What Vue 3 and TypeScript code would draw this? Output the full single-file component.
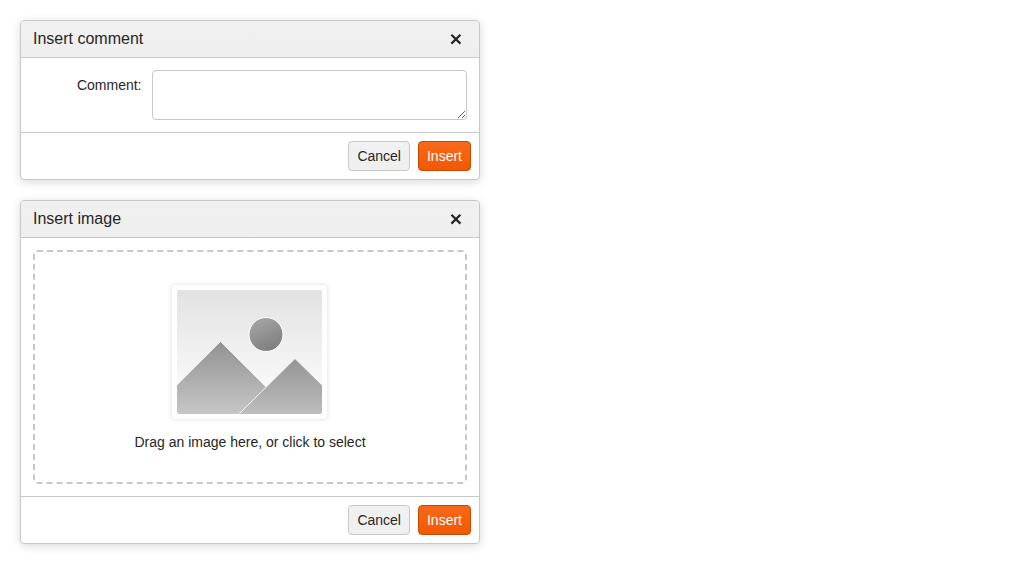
<script setup lang="ts">
import { ref } from 'vue'

const comment = ref<string>('')
const dialogs: { title: string; kind: 'comment' | 'image' }[] = [
  { title: 'Insert comment', kind: 'comment' },
  { title: 'Insert image', kind: 'image' },
]
</script>

<template>
  <main class="page">
    <section v-for="dialog in dialogs" :key="dialog.kind" class="dialog">
      <header class="header">
        <h2 class="title">{{ dialog.title }}</h2>
        <button class="close" type="button" aria-label="Close">
          <svg width="12" height="12" viewBox="0 0 12 12">
            <path d="M1.4 1.8 10.4 10.6M10.4 1.8 1.4 10.6" stroke="#262626" stroke-width="2.2" fill="none" />
          </svg>
        </button>
      </header>
      <div class="body">
        <div v-if="dialog.kind === 'comment'" class="field">
          <label class="label" for="comment">Comment:</label>
          <textarea id="comment" v-model="comment" class="input"></textarea>
        </div>
        <div v-else class="dropzone">
          <div class="frame">
            <svg class="picture" width="145" height="124" viewBox="0 0 145 124">
              <defs>
                <linearGradient id="sky" x1="0" y1="0" x2="0" y2="1">
                  <stop offset="0" stop-color="#e2e2e2" />
                  <stop offset="1" stop-color="#fff" />
                </linearGradient>
                <linearGradient id="hill" gradientUnits="userSpaceOnUse" x1="0" y1="52" x2="0" y2="124">
                  <stop offset="0" stop-color="#929292" />
                  <stop offset="1" stop-color="#c6c6c6" />
                </linearGradient>
                <linearGradient id="hill-front" gradientUnits="userSpaceOnUse" x1="0" y1="69" x2="0" y2="124">
                  <stop offset="0" stop-color="#949494" />
                  <stop offset="1" stop-color="#bdbdbd" />
                </linearGradient>
                <linearGradient id="sun" x1=".25" y1="0" x2=".75" y2="1">
                  <stop offset="0" stop-color="#a5a5a5" />
                  <stop offset="1" stop-color="#7c7c7c" />
                </linearGradient>
              </defs>
              <rect width="145" height="124" fill="url(#sky)" />
              <circle cx="89" cy="44.5" r="17" fill="url(#sun)" stroke="#fff" />
              <path d="M-2 97 43.5 51.5 116 124V126H-2Z" fill="url(#hill)" stroke="#f4f4f4" stroke-width=".8" />
              <path d="M60 126 118 68.5 147 97V126Z" fill="url(#hill-front)" stroke="#f4f4f4" />
            </svg>
          </div>
          <p class="hint">Drag an image here, or click to select</p>
        </div>
      </div>
      <footer class="footer">
        <button class="button" type="button">Cancel</button>
        <button class="button primary" type="button">Insert</button>
      </footer>
    </section>
  </main>
</template>

<style>
body {
  background: #fff;
}
</style>

<style scoped>
.page {
  display: flex;
  flex-direction: column;
  gap: 20px;
  width: 460px;
  padding: 20px;
  color: #262626;
  font: 14px/20px "Liberation Sans", Arial, sans-serif;
}
.dialog {
  border: 1px solid #c8c8c8;
  border-radius: 4px;
  background: #fff;
  box-shadow: 0 2px 10px rgba(0, 0, 0, 0.15);
}
.header {
  display: flex;
  align-items: center;
  justify-content: space-between;
  height: 36px;
  padding: 0 17px 0 12px;
  border-bottom: 1px solid #c8c8c8;
  border-radius: 3px 3px 0 0;
  background: linear-gradient(#f0f0f0, #efefef);
}
.title {
  margin: 0;
  font-size: 16px;
  font-weight: 400;
  line-height: 20px;
}
.close {
  display: flex;
  padding: 0;
  border: 0;
  background: none;
}
.body {
  padding: 12px;
}
.field {
  display: flex;
}
.label {
  box-sizing: border-box;
  width: 119px;
  padding: 5px 10.5px 0 0;
  text-align: right;
}
.input {
  box-sizing: border-box;
  width: 315px;
  height: 50px;
  margin: 0;
  border: 1px solid #c8c8c8;
  border-radius: 4px;
  outline: 0;
  background: #fff;
  resize: both;
}
.dropzone {
  box-sizing: border-box;
  display: flex;
  flex-direction: column;
  align-items: center;
  height: 234px;
  padding: 33px 0 0;
  border: 2px dashed #c8c8c8;
  border-radius: 4px;
}
.frame {
  padding: 5px;
  margin-right: 1px;
  border-radius: 3px;
  background: #fff;
  box-shadow: 0 0 4px rgba(0, 0, 0, 0.15);
}
.picture {
  display: block;
  border-radius: 2px;
}
.hint {
  margin: 13px 0 0;
}
.footer {
  display: flex;
  justify-content: flex-end;
  gap: 8px;
  padding: 8px;
  border-top: 1px solid #c8c8c8;
}
.button {
  box-sizing: border-box;
  height: 30px;
  padding: 0 8px;
  border: 1px solid #c8c8c8;
  border-radius: 4px;
  background: linear-gradient(#f1f1f1, #efefef);
  color: #262626;
  font: inherit;
}
.primary {
  border-color: #c54a00;
  background: linear-gradient(#f7691b, #f25900);
  color: #fff;
}
</style>
